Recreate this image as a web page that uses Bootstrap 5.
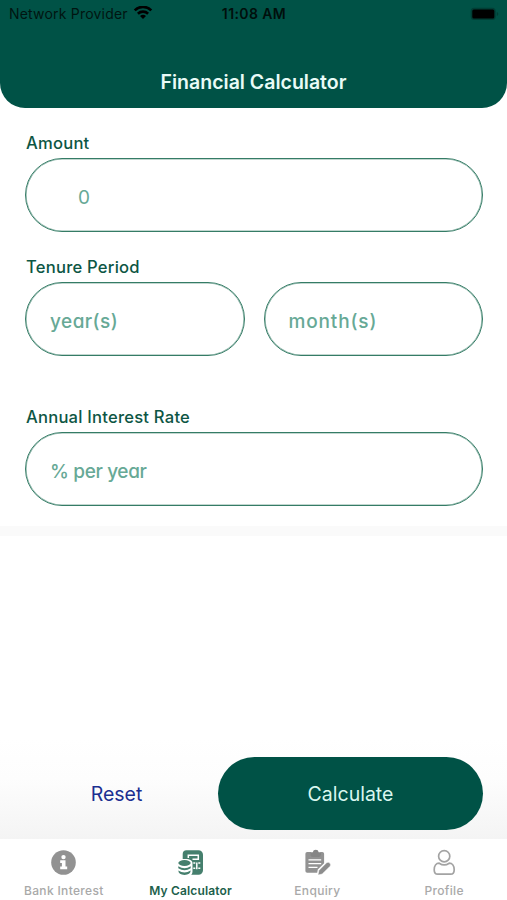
<!DOCTYPE html>
<html lang="en">
<head>
<meta charset="utf-8">
<meta name="viewport" content="width=device-width, initial-scale=1">
<title>Financial Calculator</title>
<link href="https://cdn.jsdelivr.net/npm/bootstrap@5.3.0/dist/css/bootstrap.min.css" rel="stylesheet">
<style>
  body { font-family: Inter, "Liberation Sans", sans-serif; background: #fff; }
  .screen { height: 900px; }
  .app-header { height: 108px; background: #005246; border-radius: 0 0 25px 25px; }
  .status { height: 27px; padding: 0 8px 0 9px; font-size: 14px; color: #001511; }
  .status > div { flex: 1 1 0; }
  .carrier { letter-spacing: .2px; }
  .clock { font-weight: 600; letter-spacing: .4px; color: #000f0c; }
  .screen-title { font-size: 19.5px; font-weight: 600; line-height: 24px; margin-top: 43px; color: #e9fbf7; }
  .calc-form { height: 418px; padding: 23px 24px 0 25px; }
  .field-label { display: block; font-size: 16.6px; font-weight: 500; line-height: 24px; height: 27px; padding-left: 1px; letter-spacing: .22px; color: #0d5644; }
  .field-box { height: 74px; border: 1px solid #357c66; box-shadow: inset 0 0 0 .6px rgba(53, 124, 102, .6); border-radius: 37px; padding: 5px 24px 0; font-size: 19px; font-weight: 500; font-feature-settings: "cv11"; }
  .field-box::placeholder { color: #67a996; opacity: 1; }
  .amount-box { padding-left: 52px; font-weight: 400; }
  .years-box { letter-spacing: .45px; }
  .months-box { letter-spacing: .85px; }
  .rate-box { letter-spacing: -.35px; }
  .amount-row { margin-bottom: 23px; }
  .tenure-row { margin-bottom: 49px; }
  .tenure-pair { gap: 19px; }
  .divider { height: 10px; background: #fafafa; }
  .actions { height: 100px; padding: 18px 24px 9px 25px; background: linear-gradient(#fff 0, #fdfdfd 40%, #f4f4f4 100%); }
  .btn-reset { width: 183px; margin-right: 10px; padding-top: 8px; font-size: 19.5px; color: #1c2f91; }
  .btn-calc { height: 73px; padding-top: 8px; font-size: 19.5px; color: #d9f7ef; background: #005246; }
  .btn-calc:hover { color: #fff; background: #00473d; }
  .tabs { height: 61px; background: #fff; }
  .tab { color: #a9a9a9; font-size: 12px; font-weight: 500; line-height: 16px; padding-top: 10px; padding-left: 1px; letter-spacing: .34px; }
  .tab svg { display: block; margin-bottom: 7px; }
  .tab-on { color: #1d5f4c; font-weight: 600; letter-spacing: .16px; }
</style>
</head>
<body>
<div class="screen d-flex flex-column overflow-hidden">
  <header class="app-header flex-shrink-0">
    <div class="status d-flex align-items-center">
      <div class="d-flex align-items-center text-nowrap">
        <span class="carrier me-1">Network Provider</span>
        <svg class="flex-shrink-0" width="22" height="15" viewBox="-1 1 22 15" fill="none" stroke="#000" stroke-width="2.6"><path d="M1.7 5.3a11.8 11.8 0 0 1 16.6 0M4.9 8.7a7.3 7.3 0 0 1 10.2 0"/><path d="M10 14.1l-3-3a4.3 4.3 0 0 1 6 0z" fill="#000" stroke="none"/></svg>
      </div>
      <span class="clock text-nowrap">11:08 AM</span>
      <div class="d-flex justify-content-end">
        <svg width="29" height="14" viewBox="0 0 29 14"><rect x=".7" y=".7" width="25" height="12.3" rx="3.5" fill="#003e35"/><rect x="2.3" y="2.4" width="22" height="9" rx="1.5" fill="#000"/><path d="M26.8 5v4q1.5-.6 1.5-2t-1.5-2" fill="#003e35"/></svg>
      </div>
    </div>
    <h1 class="screen-title text-center mb-0">Financial Calculator</h1>
  </header>

  <form class="calc-form flex-shrink-0">
    <div class="amount-row">
      <label class="field-label" for="amount">Amount</label>
      <input class="form-control field-box amount-box" id="amount" placeholder="0">
    </div>
    <div class="tenure-row">
      <label class="field-label" for="years">Tenure Period</label>
      <div class="tenure-pair d-flex">
        <input class="form-control field-box years-box" id="years" placeholder="year(s)">
        <input class="form-control field-box months-box" id="months" placeholder="month(s)">
      </div>
    </div>
    <div>
      <label class="field-label" for="rate">Annual Interest Rate</label>
      <input class="form-control field-box rate-box" id="rate" placeholder="% per year">
    </div>
  </form>

  <div class="divider flex-shrink-0"></div>

  <div class="actions d-flex align-items-start mt-auto">
    <button type="button" class="btn btn-reset border-0 align-self-stretch">Reset</button>
    <button type="button" class="btn btn-calc rounded-pill border-0 flex-grow-1">Calculate</button>
  </div>

  <nav class="tabs d-flex flex-shrink-0">
    <a href="#" class="tab col-3 d-flex flex-column align-items-center text-decoration-none text-nowrap">
      <svg width="27" height="27" viewBox="0 0 27 27"><circle cx="13.5" cy="13.5" r="12.3" fill="#929292"/><circle cx="13.5" cy="8.1" r="2.2" fill="#fff"/><path d="M10.2 11.3h5.3v6.2h1.7v2.7h-7v-2.7h1.7V14h-1.7z" fill="#fff"/></svg>
      Bank Interest
    </a>
    <a href="#" class="tab tab-on col-3 d-flex flex-column align-items-center text-decoration-none text-nowrap">
      <svg width="27" height="27" viewBox="0 0 27 27"><path d="M9.5 1.2h12a4.5 4.5 0 0 1 4.5 4.5v15.6a4.5 4.5 0 0 1-4.5 4.5h-7.3c1.5-1.4 1.3-3 1.3-4.3V14c0-3.4-4.4-4.3-9.8-4V5a3.8 3.8 0 0 1 3.8-3.8z" fill="#457f6d"/><path d="M11.3 9V6.2h10v4h-5.8M16.3 14h2m3 0h2M16.3 19.3h2m3 0h2M19.8 13.5v6.8" fill="none" stroke="#fff" stroke-width="1.5"/><ellipse cx="7.5" cy="13.8" rx="7.2" ry="3.9" fill="#fff"/><ellipse cx="7.5" cy="14" rx="6.2" ry="2.9" fill="#457f6d"/><path d="M1.3 17.2q6.2 4.2 12.4 0v2q-6.2 4.2-12.4 0zM1.3 21.6q6.2 4 12.4 0-.3 4.3-6.2 4.3t-6.2-4.3" fill="#457f6d"/></svg>
      My Calculator
    </a>
    <a href="#" class="tab col-3 d-flex flex-column align-items-center text-decoration-none text-nowrap">
      <svg width="27" height="27" viewBox="0 0 27 27"><path d="M3.2 3H7v3.8h9.500V3h1.800a1.800 1.800 0 0 1 1.800 1.800v9.400l-6.300 6.400-.6 3.200H3.200a1.800 1.800 0 0 1-1.800-1.800V4.800A1.800 1.800 0 0 1 3.200 3z" fill="#929292"/><path d="M6.500 6.500V3.200h2.300a3 3 0 0 1 5.900 0H17v3.300q-1 1.500-2.500 1.500h-5.500q-1.500 0-2.500-1.500z" fill="#858585"/><path d="M4.500 10.800h12.700M4.500 14.600h12.700M4.500 18.400h9" stroke="#fff" stroke-width="1.3"/><path d="M14 26l.9-4.600 7.700-7.700q1.700-1.100 3.200.4 1.400 1.600.3 3.100L18.200 25z" fill="#8d8d8d" stroke="#fff" stroke-width=".5"/></svg>
      Enquiry
    </a>
    <a href="#" class="tab col-3 d-flex flex-column align-items-center text-decoration-none text-nowrap">
      <svg width="27" height="27" viewBox="0 0 27 27" fill="none" stroke="#a3a3a3" stroke-width="1.7"><circle cx="13.2" cy="7.2" r="5.6"/><path d="M8.2 14.2q5 3.4 10 0c3.1 0 5 2.8 5 6.5 0 3.4-1 4.5-3.5 4.5h-13c-2.5 0-3.5-1.1-3.5-4.5 0-3.7 1.9-6.5 5-6.500z" stroke-linejoin="round"/></svg>
      Profile
    </a>
  </nav>
</div>
<script src="https://cdn.jsdelivr.net/npm/bootstrap@5.3.0/dist/js/bootstrap.bundle.min.js"></script>
</body>
</html>
